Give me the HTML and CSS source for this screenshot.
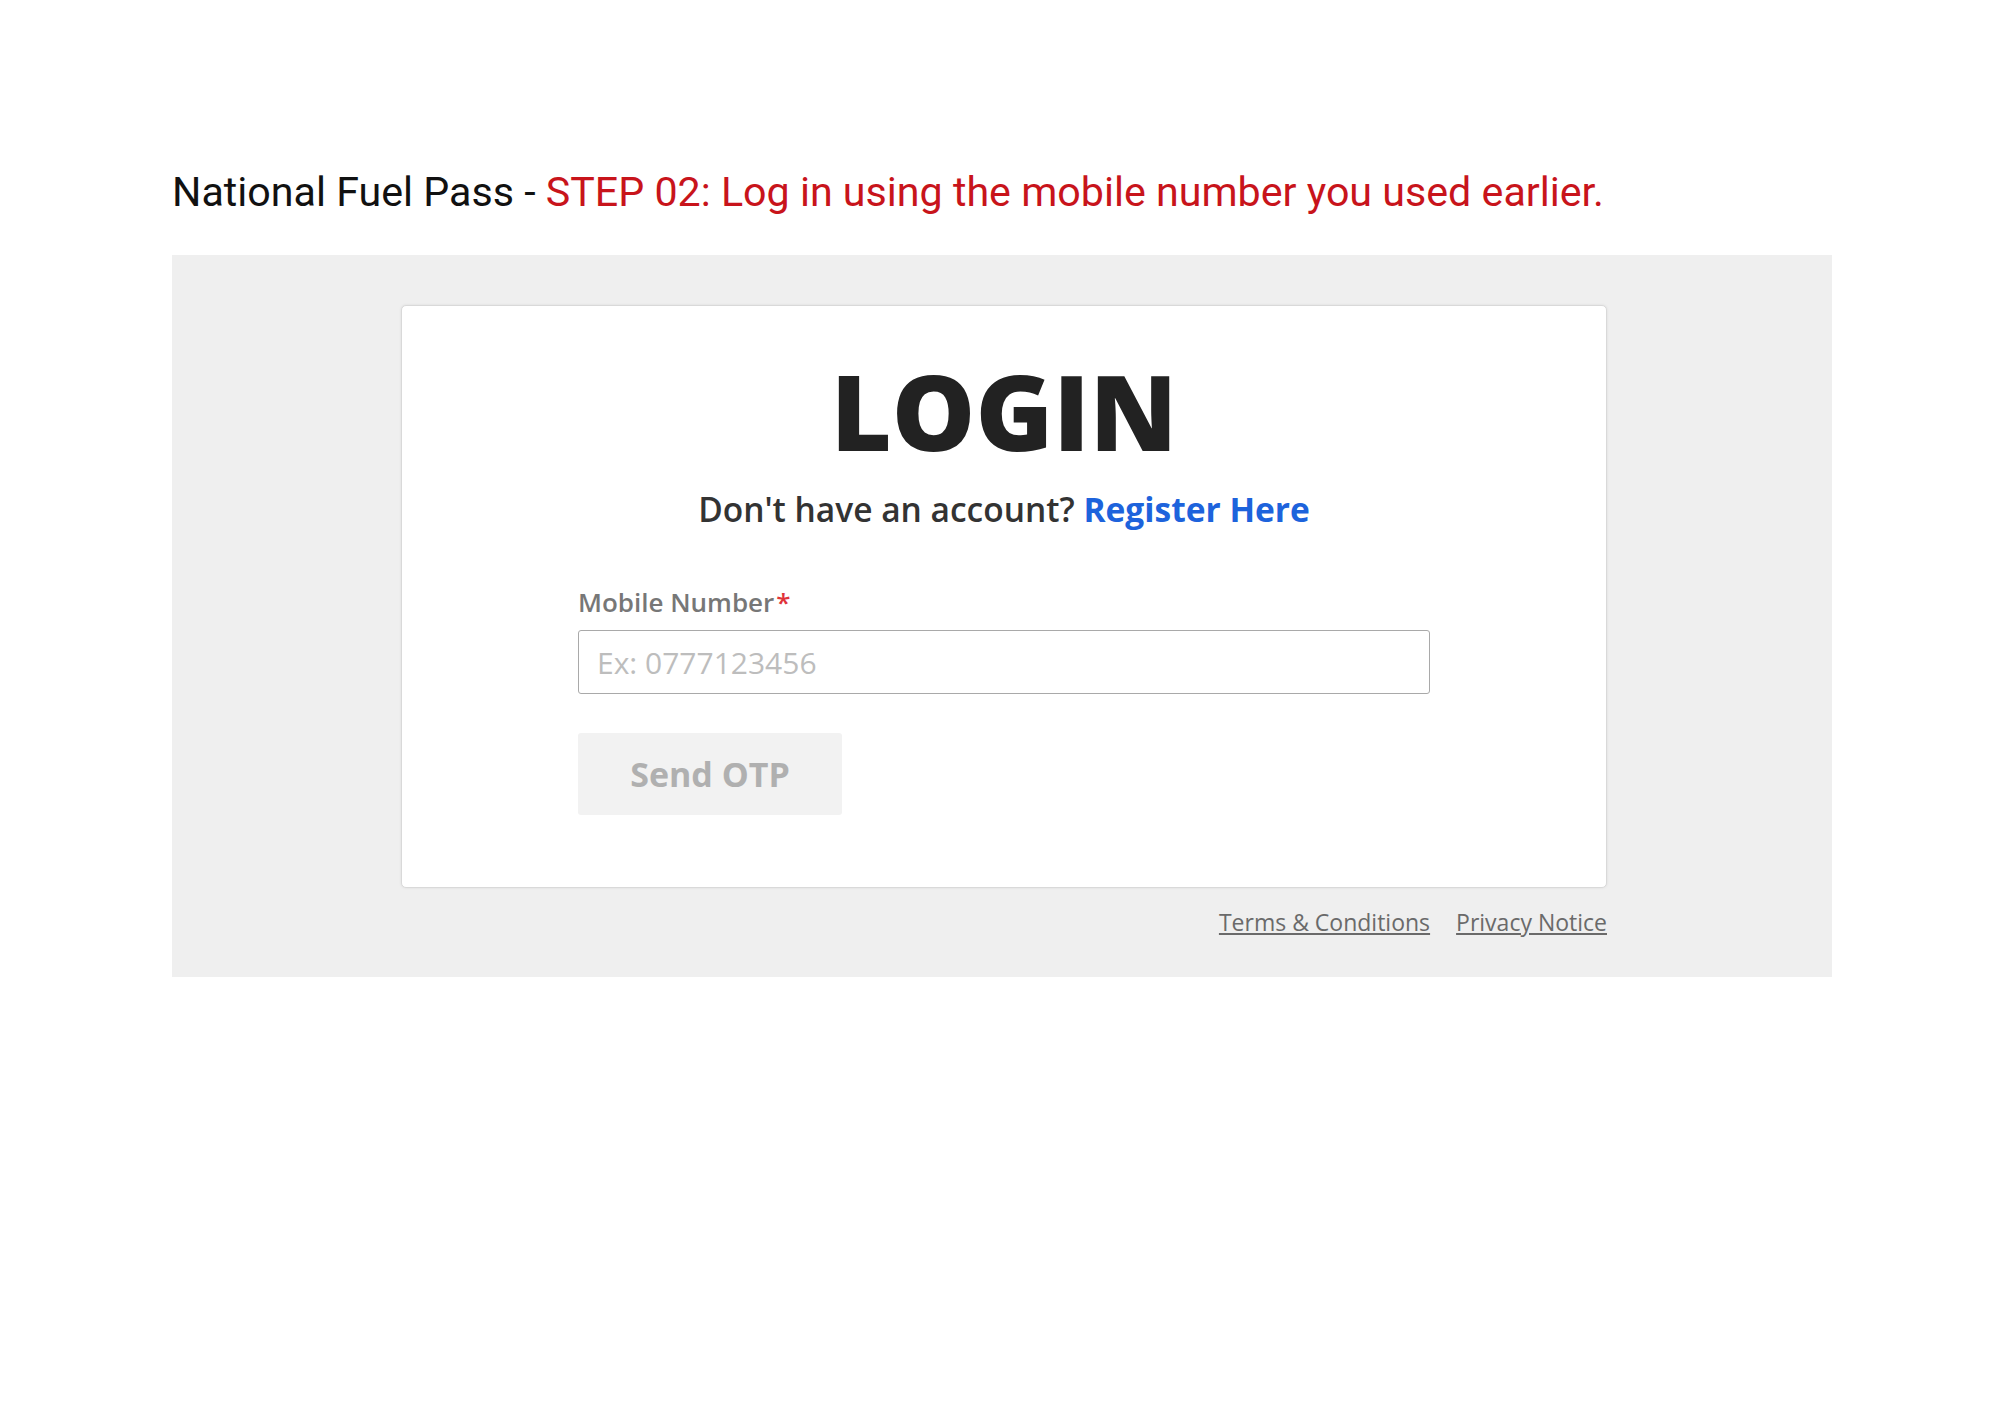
FILE: index.html
```html
<!DOCTYPE html>
<html lang="en">
<head>
<meta charset="utf-8">
<title>National Fuel Pass - Login</title>
<link rel="stylesheet" href="styles.css">
</head>
<body>
<h1 class="doc-title">National Fuel Pass - <span class="step">STEP 02: Log in using the mobile number you used earlier.</span></h1>
<section class="shot">
  <div class="card">
    <h2 class="login-title">LOGIN</h2>
    <p class="register-line">Don't have an account? <a class="register-link" href="#">Register Here</a></p>
    <form class="login-form">
      <label class="field-label" for="mobile">Mobile Number<span class="req">*</span></label>
      <input class="field-input" id="mobile" type="text" placeholder="Ex: 0777123456">
      <button class="otp-btn" type="button">Send OTP</button>
    </form>
  </div>
  <nav class="footer-links">
    <a href="#">Terms &amp; Conditions</a>
    <a href="#">Privacy Notice</a>
  </nav>
</section>
</body>
</html>
```
FILE: styles.css
```css
html, body {
  margin: 0;
  padding: 0;
  background: #ffffff;
}

body {
  width: 2000px;
  min-height: 1414px;
}

.doc-title {
  margin: 0 0 37px;
  padding: 166px 0 0 172px;
  font-family: Roboto, "Liberation Sans", sans-serif;
  font-weight: 400;
  font-size: 41.2px;
  line-height: 52px;
  color: #111111;
  white-space: nowrap;
}

.step {
  color: #c8141b;
}

.shot {
  margin-left: 172px;
  width: 1660px;
  height: 722px;
  background: #efefef;
  padding-top: 50px;
  box-sizing: border-box;
  font-family: "Open Sans", "Liberation Sans", sans-serif;
}

.card {
  margin-left: 229px;
  width: 1206px;
  height: 583px;
  box-sizing: border-box;
  background: #ffffff;
  border: 1px solid #d9d9d9;
  border-radius: 5px;
  box-shadow: 0 0 3px rgba(0, 0, 0, 0.08);
  display: flex;
  flex-direction: column;
  align-items: center;
  padding-top: 52px;
}

.login-title {
  margin: 0;
  font-size: 105px;
  font-weight: 800;
  line-height: 105px;
  color: #222222;
  letter-spacing: 0;
}

.register-line {
  margin: 26px 0 0;
  font-size: 33.5px;
  font-weight: 600;
  line-height: 40px;
  color: #333333;
}

.register-link {
  color: #1d63dc;
  font-weight: 700;
  text-decoration: none;
}

.login-form {
  width: 852px;
  margin-top: 57px;
  display: flex;
  flex-direction: column;
  align-items: flex-start;
}

.field-label {
  font-size: 26px;
  font-weight: 600;
  line-height: 32px;
  color: #777777;
}

.req {
  color: #e0333a;
  margin-left: 2px;
}

.field-input {
  margin-top: 12px;
  width: 852px;
  height: 64px;
  box-sizing: border-box;
  border: 1px solid #a9a9a9;
  border-radius: 3px;
  padding: 0 18px;
  font-family: "Open Sans", "Liberation Sans", sans-serif;
  font-size: 30px;
  color: #333333;
  background: #ffffff;
  outline: none;
}

.field-input::placeholder {
  color: #bdbdbd;
}

.otp-btn {
  margin-top: 39px;
  width: 264px;
  height: 82px;
  border: none;
  border-radius: 3px;
  background: #f2f2f2;
  font-family: "Open Sans", "Liberation Sans", sans-serif;
  font-size: 34px;
  font-weight: 700;
  color: #b0b0b0;
  padding: 0;
}

.footer-links {
  width: 1435px;
  margin-top: 18px;
  display: flex;
  justify-content: flex-end;
  gap: 26px;
}

.footer-links a {
  font-size: 23px;
  line-height: 32px;
  color: #6a6a6a;
  text-decoration: underline;
}
```
